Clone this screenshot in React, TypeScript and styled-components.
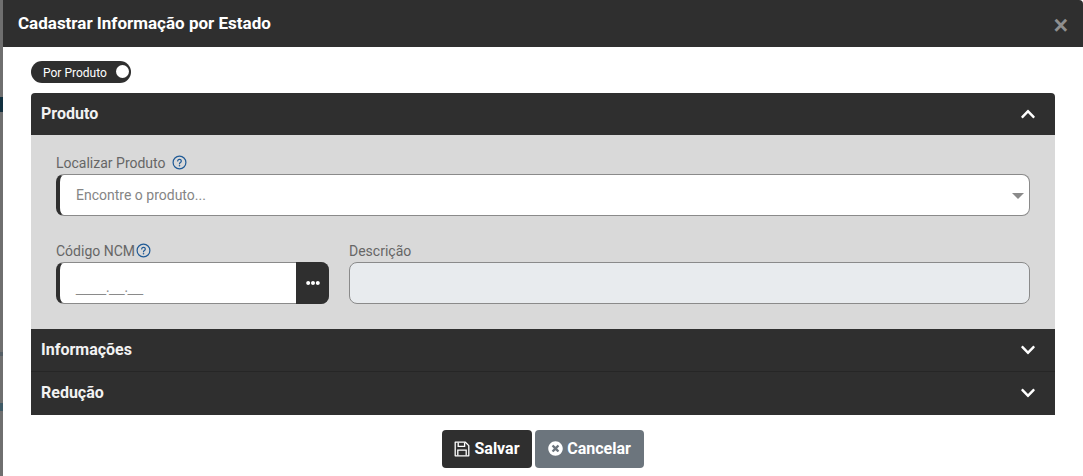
import React from 'react';
import styled, { createGlobalStyle } from 'styled-components';
import { FaChevronDown, FaChevronUp, FaEllipsisH, FaTimesCircle } from 'react-icons/fa';

const GlobalStyle = createGlobalStyle`
  html, body {
    margin: 0;
    padding: 0;
    height: 100%;
    overflow: hidden;
    font-family: Roboto, "Liberation Sans", sans-serif;
  }

  /* page behind the modal, only a sliver of it shows on the left */
  body {
    background: linear-gradient(
      to bottom,
      #6f6f6f 0 97px,
      #12303f 97px 112px,
      #6f6f6f 112px 352px,
      #555f66 352px 356px,
      #6f6f6f 356px 403px,
      #3f5a66 403px 411px,
      #6f6f6f 411px
    );
  }
`;

const Dialog = styled.div`
  margin-left: 3px;
  height: 476px;
  background: #fff;
  display: flex;
  flex-direction: column;
`;

const DialogHeader = styled.header`
  height: 47px;
  flex: none;
  background: #2f2f2f;
  border-top-right-radius: 4px;
  display: flex;
  align-items: center;
  justify-content: space-between;
  padding: 0 15px;
  color: #fff;
`;

const DialogTitle = styled.h5`
  margin: 0;
  font-size: 17px;
  font-weight: 700;
  line-height: 47px;
`;

const CloseMark = styled.span`
  font-family: "Liberation Sans", sans-serif;
  font-size: 25px;
  font-weight: 700;
  line-height: 1;
  color: #8f8f8f;
  margin-top: 3px;
`;

const DialogBody = styled.div`
  padding: 14px 28px 0;
`;

const ToggleChip = styled.div`
  width: 100px;
  height: 22px;
  box-sizing: border-box;
  border-radius: 11px;
  background: #2f2f2f;
  color: #fff;
  font-size: 12px;
  line-height: 24px;
  display: flex;
  justify-content: space-between;
  padding: 0 1px 0 12px;
  margin-bottom: 10px;
`;

const ToggleKnob = styled.span`
  width: 13px;
  height: 13px;
  margin: 4px 1px 0 0;
  border-radius: 50%;
  background: #fff;
`;

const Accordion = styled.section`
  display: flex;
  flex-direction: column;
`;

const AccordionHeader = styled.div<{ $first?: boolean; $divider?: boolean }>`
  height: ${({ $first }) => ($first ? 42 : 43)}px;
  box-sizing: border-box;
  background: #2f2f2f;
  color: #f2f2f2;
  font-size: 16px;
  line-height: 41px;
  font-weight: 700;
  display: flex;
  justify-content: space-between;
  padding: 0 19px 0 10px;
  border-top-left-radius: ${({ $first }) => ($first ? 4 : 0)}px;
  border-top-right-radius: ${({ $first }) => ($first ? 4 : 0)}px;
  border-bottom: ${({ $divider }) => ($divider ? '1px solid #262626' : 'none')};

  svg {
    margin-top: 13px;
  }
`;

const AccordionPanel = styled.div`
  height: 194px;
  box-sizing: border-box;
  background: #d9d9d9;
  padding: 20px 25px 0;
  display: flex;
  flex-direction: column;
  gap: 27px;
`;

const FieldRow = styled.div`
  display: flex;
  gap: 20px;
`;

const Field = styled.div<{ $width?: number; $grow?: boolean }>`
  display: flex;
  flex-direction: column;
  flex: ${({ $width, $grow }) => ($width ? `0 0 ${$width}px` : $grow ? '1 1 0' : 'none')};
  min-width: 0;
`;

const FieldLabel = styled.label`
  height: 19px;
  font-size: 14px;
  line-height: 16px;
  color: #666;
  display: flex;
  align-items: flex-start;
`;

const HelpMark = styled.svg<{ $gap: number }>`
  width: 15px;
  height: 15px;
  margin-left: ${({ $gap }) => $gap}px;
  flex: none;
`;

const InputShell = styled.div<{ $marked?: boolean; $disabled?: boolean }>`
  height: 42px;
  box-sizing: border-box;
  border: 1px solid #8a8a8a;
  border-left: ${({ $marked }) => ($marked ? '4px solid #2f2f2f' : '1px solid #8a8a8a')};
  border-radius: 8px;
  background: ${({ $disabled }) => ($disabled ? '#e8ebee' : '#fff')};
  display: flex;
  align-items: center;
  padding-left: 16px;
  font-size: 14px;
  color: #858585;
  position: relative;
`;

const Caret = styled.span`
  position: absolute;
  right: 5px;
  top: 18px;
  width: 0;
  height: 0;
  border-left: 6px solid transparent;
  border-right: 6px solid transparent;
  border-top: 6px solid #8a8a8a;
`;

const MaskText = styled.span`
  font-family: "Liberation Sans", sans-serif;
  font-size: 14px;
  line-height: 16px;
  margin-top: 8px;
  color: #8a8a8a;
  letter-spacing: -0.35px;
  white-space: pre;
`;

const AddonButton = styled.span`
  position: absolute;
  right: -1px;
  top: -1px;
  bottom: -1px;
  width: 33px;
  background: #2f2f2f;
  border-radius: 0 8px 8px 0;
  color: #fff;
  display: flex;
  align-items: center;
  justify-content: center;
  font-size: 14px;
`;

const DialogFooter = styled.footer`
  display: flex;
  justify-content: center;
  gap: 3px;
  padding-top: 15px;
`;

const ActionButton = styled.button<{ $tone: 'dark' | 'muted'; $width: number }>`
  width: ${({ $width }) => $width}px;
  height: 38px;
  border: none;
  border-radius: 4px;
  background: ${({ $tone }) => ($tone === 'dark' ? '#2f2f2f' : '#6c757d')};
  color: #fff;
  font-family: inherit;
  font-size: 16px;
  line-height: 37px;
  font-weight: 700;
  display: flex;
  align-items: center;
  justify-content: center;
  gap: 4px;
  padding: 0 0 1px;
`;

const Help: React.FC<{ gap: number }> = ({ gap }) => (
  <HelpMark $gap={gap} viewBox="0 0 15 15" fill="none">
    <circle cx="7.5" cy="7.5" r="6.4" stroke="#1f5a96" strokeWidth="1.2" />
    <path
      d="M5.7 6a1.8 1.7 0 1 1 2.7 1.5c-.6.4-.9.6-.9 1.3"
      stroke="#1f5a96"
      strokeWidth="1.2"
      strokeLinecap="round"
    />
    <circle cx="7.5" cy="10.8" r=".8" fill="#1f5a96" />
  </HelpMark>
);

const SaveGlyph = () => (
  <svg width="16" height="16" viewBox="0 0 16 16" fill="none" stroke="#fff" strokeWidth="1.3">
    <path d="M1.2 1.2h10.2l3.4 3.4v10.2H1.2z" strokeLinejoin="round" />
    <path d="M4.2 1.4v4h6.4v-4" />
    <path d="M3.8 14.6V9.2h8.4v5.4" />
  </svg>
);

export default function App() {
  return (
    <>
      <GlobalStyle />
      <Dialog>
        <DialogHeader>
          <DialogTitle>Cadastrar Informação por Estado</DialogTitle>
          <CloseMark>×</CloseMark>
        </DialogHeader>
        <DialogBody>
          <ToggleChip>
            Por Produto
            <ToggleKnob />
          </ToggleChip>
          <Accordion>
            <AccordionHeader $first>
              Produto
              <FaChevronUp size={16} color="#fff" />
            </AccordionHeader>
            <AccordionPanel>
              <Field>
                <FieldLabel>
                  Localizar Produto
                  <Help gap={6} />
                </FieldLabel>
                <InputShell $marked>
                  Encontre o produto...
                  <Caret />
                </InputShell>
              </Field>
              <FieldRow>
                <Field $width={273}>
                  <FieldLabel>
                    Código NCM
                    <Help gap={1} />
                  </FieldLabel>
                  <InputShell $marked>
                    <MaskText>____.__.__</MaskText>
                    <AddonButton>
                      <FaEllipsisH />
                    </AddonButton>
                  </InputShell>
                </Field>
                <Field $grow>
                  <FieldLabel>Descrição</FieldLabel>
                  <InputShell $disabled />
                </Field>
              </FieldRow>
            </AccordionPanel>
            <AccordionHeader $divider>
              Informações
              <FaChevronDown size={16} color="#fff" />
            </AccordionHeader>
            <AccordionHeader>
              Redução
              <FaChevronDown size={16} color="#fff" />
            </AccordionHeader>
          </Accordion>
          <DialogFooter>
            <ActionButton $tone="dark" $width={90}>
              <SaveGlyph />
              Salvar
            </ActionButton>
            <ActionButton $tone="muted" $width={109}>
              <FaTimesCircle size={15} />
              Cancelar
            </ActionButton>
          </DialogFooter>
        </DialogBody>
      </Dialog>
    </>
  );
}
